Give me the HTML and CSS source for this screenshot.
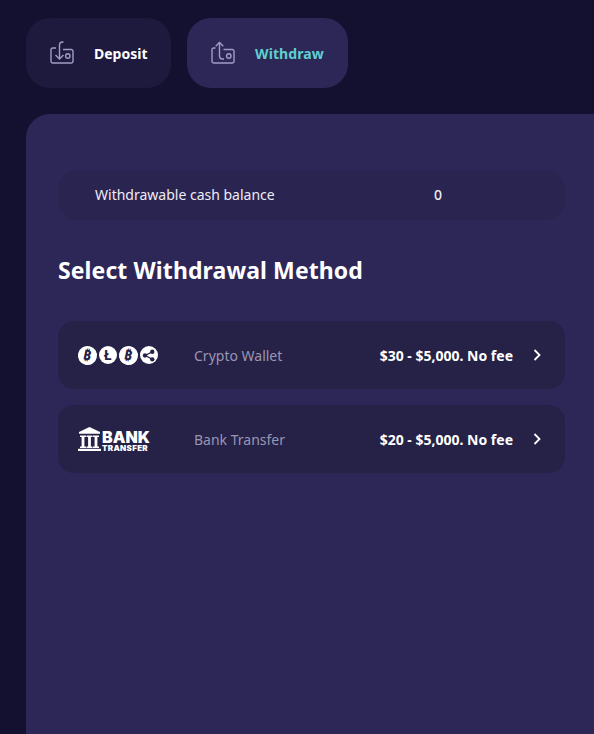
FILE: index.html
```html
<!DOCTYPE html>
<html lang="en">
<head>
  <meta charset="UTF-8">
  <meta name="viewport" content="width=device-width, initial-scale=1.0">
  <title>Withdraw</title>
  <link rel="stylesheet" href="styles.css">
</head>
<body>

  <div class="tabs">
    <a class="tab tab-deposit">
      <svg class="tab-icon" width="24" height="24" viewBox="0 0 24 24">
        <path d="M6 7H2.800a1.800 1.800 0 0 0-1.800 1.800v11.400a1.800 1.800 0 0 0 1.800 1.800h18.400a1.800 1.800 0 0 0 1.800-1.800V10.300a1.800 1.800 0 0 0-1.800-1.800H13"/>
        <path d="M13.500 1h-1a3 3 0 0 0-3 3V17.500"/>
        <path d="M5.500 14 9.500 18l4-4"/>
        <circle cx="17.800" cy="15" r="2.200"/>
      </svg>
      <span class="tab-label">Deposit</span>
    </a>
    <a class="tab tab-withdraw">
      <svg class="tab-icon" width="24" height="24" viewBox="0 0 24 24">
        <path d="M4.500 7H2.800a1.800 1.800 0 0 0-1.800 1.800v11.400a1.800 1.800 0 0 0 1.800 1.800h18.400a1.800 1.800 0 0 0 1.800-1.800V10.300a1.800 1.800 0 0 0-1.800-1.800H12.500"/>
        <path d="M8.500 1.500V15a3 3 0 0 0 3 3h1.500"/>
        <path d="M4.700 5.300 8.500 1.500l3.800 3.800"/>
        <circle cx="17.800" cy="15" r="2.200"/>
      </svg>
      <span class="tab-label">Withdraw</span>
    </a>
  </div>

  <div class="panel">
    <div class="balance">
      <span class="balance-label">Withdrawable cash balance</span>
      <span class="balance-value">0</span>
    </div>

    <h1>Select Withdrawal Method</h1>

    <div class="methods">
      <div class="method">
        <div class="method-logo coins">
          <span class="coin coin-btc">₿</span>
          <span class="coin">Ł</span>
          <span class="coin coin-btc">₿</span>
          <span class="coin">
            <svg width="13" height="13" viewBox="0 0 12 12">
              <path class="share-line" d="M9.500 2.500 3 6l6.500 3.500"/>
              <circle cx="9.500" cy="2.500" r="2"/>
              <circle cx="2.700" cy="6" r="2"/>
              <circle cx="9.500" cy="9.500" r="2"/>
            </svg>
          </span>
        </div>
        <span class="method-name">Crypto Wallet</span>
        <span class="method-range">$30 - $5,000. No fee</span>
        <svg class="chevron" width="8" height="12" viewBox="0 0 8 12"><path d="M1.500 1 6.500 6l-5 5"/></svg>
      </div>

      <div class="method">
        <div class="method-logo bank">
          <svg class="bank-icon" width="23" height="24" viewBox="0 0 23 24">
            <path d="M11.500 0 22 5v1.800H1V5z"/>
            <path d="M0 21.800h23V24H0z"/>
            <path d="M2 8.500h6v1.500H6.400v9.500H8V21H2v-1.500h1.600V10H2z"/>
            <path d="M8.500 8.500h6v1.500h-1.600v9.500h1.600V21h-6v-1.500h1.600V10H8.500z"/>
            <path d="M15 8.500h6v1.500h-1.600v9.500H21V21h-6v-1.500h1.600V10H15z"/>
          </svg>
          <div class="bank-text">
            <span class="bank-big">BANK</span>
            <span class="bank-small">TRANSFER</span>
          </div>
        </div>
        <span class="method-name">Bank Transfer</span>
        <span class="method-range">$20 - $5,000. No fee</span>
        <svg class="chevron" width="8" height="12" viewBox="0 0 8 12"><path d="M1.500 1 6.500 6l-5 5"/></svg>
      </div>
    </div>
  </div>

</body>
</html>
```

FILE: styles.css
```css
html, body {
  height: 100%;
}

body {
  margin: 0;
  overflow: hidden;
  background-color: #14102f;
  color: #fff;
  font-family: "Noto Sans", "Open Sans", sans-serif;
}

.tabs {
  display: flex;
  gap: 16px;
  padding: 18px 0 26px 26px;
}

.tab {
  display: flex;
  align-items: center;
  height: 70px;
  border-radius: 24px;
  padding-left: 24px;
  box-sizing: border-box;
}

.tab-deposit {
  width: 145px;
  background-color: #1e1a3e;
}

.tab-withdraw {
  width: 161px;
  background-color: #2d2758;
}

.tab-icon {
  fill: none;
  stroke: #a29cc4;
  stroke-width: 1.400;
  margin-right: 20px;
}

.tab-label {
  font-size: 14px;
  font-weight: 700;
}

.tab-withdraw .tab-label {
  color: #5fcfcf;
  letter-spacing: 0.100px;
}

.panel {
  height: 620px;
  box-sizing: border-box;
  margin-left: 26px;
  padding: 56px 29px 0 32px;
  background-color: #2d2758;
  border-radius: 24px 0 0 0;
}

.balance {
  display: flex;
  align-items: center;
  height: 50px;
  padding-left: 37px;
  padding-bottom: 2px;
  box-sizing: border-box;
  background-color: #2a2451;
  border-radius: 20px;
  font-size: 14px;
  color: #eeecf7;
}

.balance-label {
  width: 339px;
}

.balance-value {
  font-weight: 500;
}

h1 {
  margin: 34px 0 35px;
  font-size: 23px;
  line-height: 32px;
  font-weight: 700;
  letter-spacing: 0.100px;
}

.methods {
  display: flex;
  flex-direction: column;
  gap: 16px;
}

.method {
  display: flex;
  align-items: center;
  height: 68px;
  padding: 0 24px 0 20px;
  background-color: #262147;
  border-radius: 16px;
}

.method-logo {
  display: flex;
  align-items: center;
  width: 116px;
}

.coins {
  gap: 2px;
}

.coin {
  display: flex;
  align-items: center;
  justify-content: center;
  width: 18.500px;
  height: 18.500px;
  border-radius: 50%;
  background-color: #fff;
  color: #262147;
  font-size: 14px;
  font-weight: 700;
  line-height: 1;
}

.coin-btc {
  transform: rotate(12deg);
}

.coin svg {
  fill: #262147;
}

.share-line {
  fill: none;
  stroke: #262147;
  stroke-width: 1.200;
}

.bank {
  gap: 1px;
}

.bank-icon {
  fill: #fff;
}

.bank-text {
  display: flex;
  flex-direction: column;
  margin-top: 4px;
  color: #fff;
  font-family: "Inter", "Liberation Sans", sans-serif;
  font-weight: 900;
}

.bank-big {
  font-size: 16px;
  line-height: 14px;
}

.bank-small {
  font-size: 8px;
  line-height: 9px;
  letter-spacing: 0.300px;
}

.method-name {
  flex: 1;
  font-size: 14px;
  color: #9a96b2;
}

.method-range {
  font-size: 14px;
  font-weight: 700;
}

.chevron {
  margin-left: 20px;
  fill: none;
  stroke: #fff;
  stroke-width: 1.800;
}
```
